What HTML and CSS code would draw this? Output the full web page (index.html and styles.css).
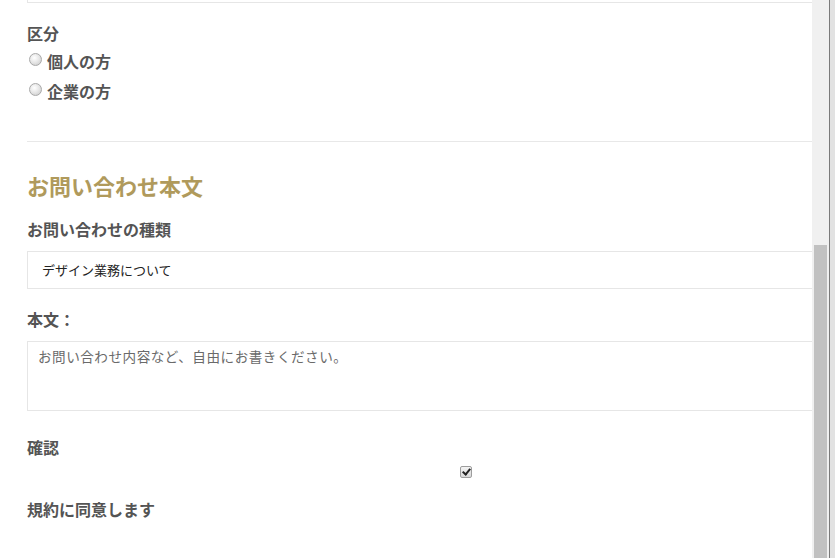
FILE: index.html
```html
<!DOCTYPE html>
<html lang="ja">
<head>
<meta charset="utf-8">
<title>お問い合わせ</title>
<link rel="stylesheet" href="styles.css">
</head>
<body>
<div class="window">
  <main class="viewport">
    <form class="form">
      <div class="prev-field"></div>

      <div class="label first">区分</div>
      <label class="radio-row"><input type="radio" name="kubun" class="radio"><span>個人の方</span></label>
      <label class="radio-row"><input type="radio" name="kubun" class="radio"><span>企業の方</span></label>

      <hr class="divider">

      <h2 class="section-title">お問い合わせ本文</h2>

      <div class="label kind">お問い合わせの種類</div>
      <div class="select">デザイン業務について</div>

      <div class="label body-label">本文：</div>
      <div class="textarea">お問い合わせ内容など、自由にお書きください。</div>

      <div class="label confirm">確認</div>
      <div class="check-row"><input type="checkbox" class="check" checked></div>

      <div class="label agree">規約に同意します</div>
    </form>
  </main>
  <div class="scrollbar">
    <div class="track"><div class="thumb"></div></div>
    <div class="edge"></div>
  </div>
</div>
</body>
</html>
```
FILE: styles.css
```css
html, body {
  margin: 0;
  padding: 0;
  background: #ffffff;
  overflow: hidden;
}

.window {
  display: flex;
  width: 835px;
  height: 558px;
}

.viewport {
  width: 812px;
  height: 558px;
  overflow: hidden;
  flex: none;
}

.form {
  width: 878px;
  padding-left: 27px;
  font-family: "Noto Sans CJK JP", "Noto Sans", sans-serif;
  color: #545454;
}

.prev-field {
  height: 37px;
  margin-top: -36px;
  border: 1px solid #e6e6e6;
  background: #fff;
}

.label {
  font-size: 16px;
  font-weight: 700;
  line-height: 21px;
  padding-bottom: 3px;
  color: #545454;
}

.first { margin-top: 20px; }

.radio-row {
  display: flex;
  align-items: flex-start;
  height: 30px;
  font-size: 16px;
  font-weight: 700;
  line-height: 28px;
  color: #545454;
}

.radio {
  appearance: none;
  -webkit-appearance: none;
  width: 13px;
  height: 13px;
  margin: 6px 5px 0 2px;
  border: 1px solid #a9a9a9;
  border-radius: 50%;
  box-sizing: border-box;
  background: radial-gradient(circle at 40% 35%, #ffffff 0%, #e8e8e8 45%, #c6c6c6 100%);
  flex: none;
}

.divider {
  margin: 34px 0 0 0;
  border: 0;
  border-top: 1px solid #e8e8e8;
  height: 0;
}

.section-title {
  margin: 30px 0 0 0;
  padding-bottom: 3px;
  font-size: 22px;
  font-weight: 700;
  line-height: 27px;
  color: #b09a5c;
}

.kind { margin-top: 17px; }

.select {
  margin-top: 8px;
  height: 36px;
  border: 1px solid #e6e6e6;
  padding-left: 14px;
  font-size: 13px;
  line-height: 36px;
  color: #222;
  font-weight: 400;
}

.body-label { margin-top: 20px; }

.textarea {
  margin-top: 8px;
  height: 63px;
  border: 1px solid #e6e6e6;
  padding: 5px 0 0 10px;
  font-size: 13.6px;
  letter-spacing: 0.5px;
  line-height: 18px;
  color: #6a6a6a;
  font-weight: 400;
}

.confirm { margin-top: 26px; }

.check-row {
  display: flex;
  justify-content: center;
  margin-top: 5px;
  height: 13px;
}

.check {
  appearance: none;
  -webkit-appearance: none;
  position: relative;
  width: 12px;
  height: 12px;
  margin: 0;
  border: 1px solid #9d9d9d;
  border-radius: 2px;
  box-sizing: border-box;
  background: linear-gradient(#f4f4f4, #d8d8d8);
}

.check::after {
  content: "";
  position: absolute;
  left: 3px;
  top: 0px;
  width: 3px;
  height: 6px;
  border-right: 2px solid #222;
  border-bottom: 2px solid #222;
  transform: rotate(40deg);
}

.agree { margin-top: 20px; }

.scrollbar {
  display: flex;
  width: 23px;
  height: 558px;
  flex: none;
}

.track {
  width: 17px;
  height: 558px;
  background: #f0f0f0;
  padding-top: 245px;
  box-sizing: border-box;
}

.thumb {
  margin: 0 2px;
  height: 313px;
  background: #c1c1c1;
}

.edge {
  width: 6px;
  height: 558px;
  background: #e2e2e2;
  border-left: 1px solid #7a7a7a;
  box-sizing: border-box;
}
```
